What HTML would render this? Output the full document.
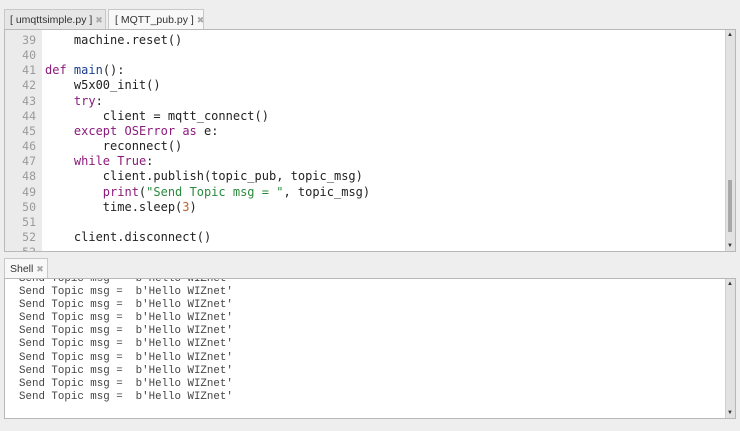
<!DOCTYPE html>
<html><head><style>
body{margin:0;width:740px;height:431px;background:#eeeeee;position:relative;overflow:hidden;font-family:"Liberation Sans","DejaVu Sans",sans-serif}
.tab{position:absolute;height:20px;border:1px solid #c8c8c8;border-bottom:none;font-size:10.5px;color:#333;line-height:20px;padding-left:5px;box-sizing:border-box;white-space:nowrap;overflow:hidden}
.x{color:#aaa;font-size:9px}
.box{position:absolute;left:4px;width:732px;background:#fff;border:1px solid #b8b8b8;box-sizing:border-box}
.gut{position:absolute;left:0;top:0;bottom:0;width:37px;background:#ebebeb}
.ln{position:absolute;left:0;width:31px;text-align:right;font:11.5px "DejaVu Sans Mono",monospace;color:#9a9a9a}
.code{position:absolute;left:40px;font:12px "DejaVu Sans Mono",monospace;color:#222;white-space:pre}
.k{color:#8b1a7b}.f{color:#1b3f8e}.s{color:#2b8a3c}.n{color:#c0602a}
.sb{position:absolute;right:0;top:0;bottom:0;width:9px;background:#e2e2e2;border-left:1px solid #d0d0d0}
.sh{position:absolute;left:14px;font:10.8px "Liberation Mono",monospace;color:#444;white-space:pre}
</style></head><body>
<div class="tab" style="left:4px;top:9px;width:102px;background:#e6e6e6">[ umqttsimple.py ] <span class="x">✖</span></div>
<div class="tab" style="left:108px;top:9px;width:96px;background:#f8f8f8;padding-left:6px">[ MQTT_pub.py ] <span class="x">✖</span></div>
<div class="box" style="top:29px;height:223px;overflow:hidden">
<div class="gut"></div>
<div class="sb"><div style="position:absolute;left:2px;top:150px;width:4px;height:52px;background:#a8a8a8"></div><div style="position:absolute;left:1px;top:2px;font-size:6px;color:#333">▲</div><div style="position:absolute;left:1px;bottom:2px;font-size:6px;color:#333">▼</div></div>
<div class="ln" style="top:3px;line-height:15.15px">39<br>40<br>41<br>42<br>43<br>44<br>45<br>46<br>47<br>48<br>49<br>50<br>51<br>52<br>53</div>
<div class="code" style="top:3px;line-height:15.15px">    machine.reset()

<span class="k">def</span> <span class="f">main</span>():
    w5x00_init()
    <span class="k">try</span>:
        client = mqtt_connect()
    <span class="k">except</span> <span class="k">OSError</span> <span class="k">as</span> e:
        reconnect()
    <span class="k">while</span> <span class="k">True</span>:
        client.publish(topic_pub, topic_msg)
        <span class="k">print</span>(<span class="s">"Send Topic msg = "</span>, topic_msg)
        time.sleep(<span class="n">3</span>)

    client.disconnect()</div>
</div>
<div class="tab" style="left:4px;top:258px;width:44px;background:#f8f8f8;padding-left:5px">Shell <span class="x">✖</span></div>
<div class="box" style="top:278px;height:141px;overflow:hidden">
<div class="sb"><div style="position:absolute;left:1px;top:2px;font-size:6px;color:#333">▲</div><div style="position:absolute;left:1px;bottom:2px;font-size:6px;color:#333">▼</div></div>
<div class="sh" style="top:-6px;line-height:13.1px">Send Topic msg =  b'Hello WIZnet'
Send Topic msg =  b'Hello WIZnet'
Send Topic msg =  b'Hello WIZnet'
Send Topic msg =  b'Hello WIZnet'
Send Topic msg =  b'Hello WIZnet'
Send Topic msg =  b'Hello WIZnet'
Send Topic msg =  b'Hello WIZnet'
Send Topic msg =  b'Hello WIZnet'
Send Topic msg =  b'Hello WIZnet'
Send Topic msg =  b'Hello WIZnet'</div>
</div>
</body></html>
